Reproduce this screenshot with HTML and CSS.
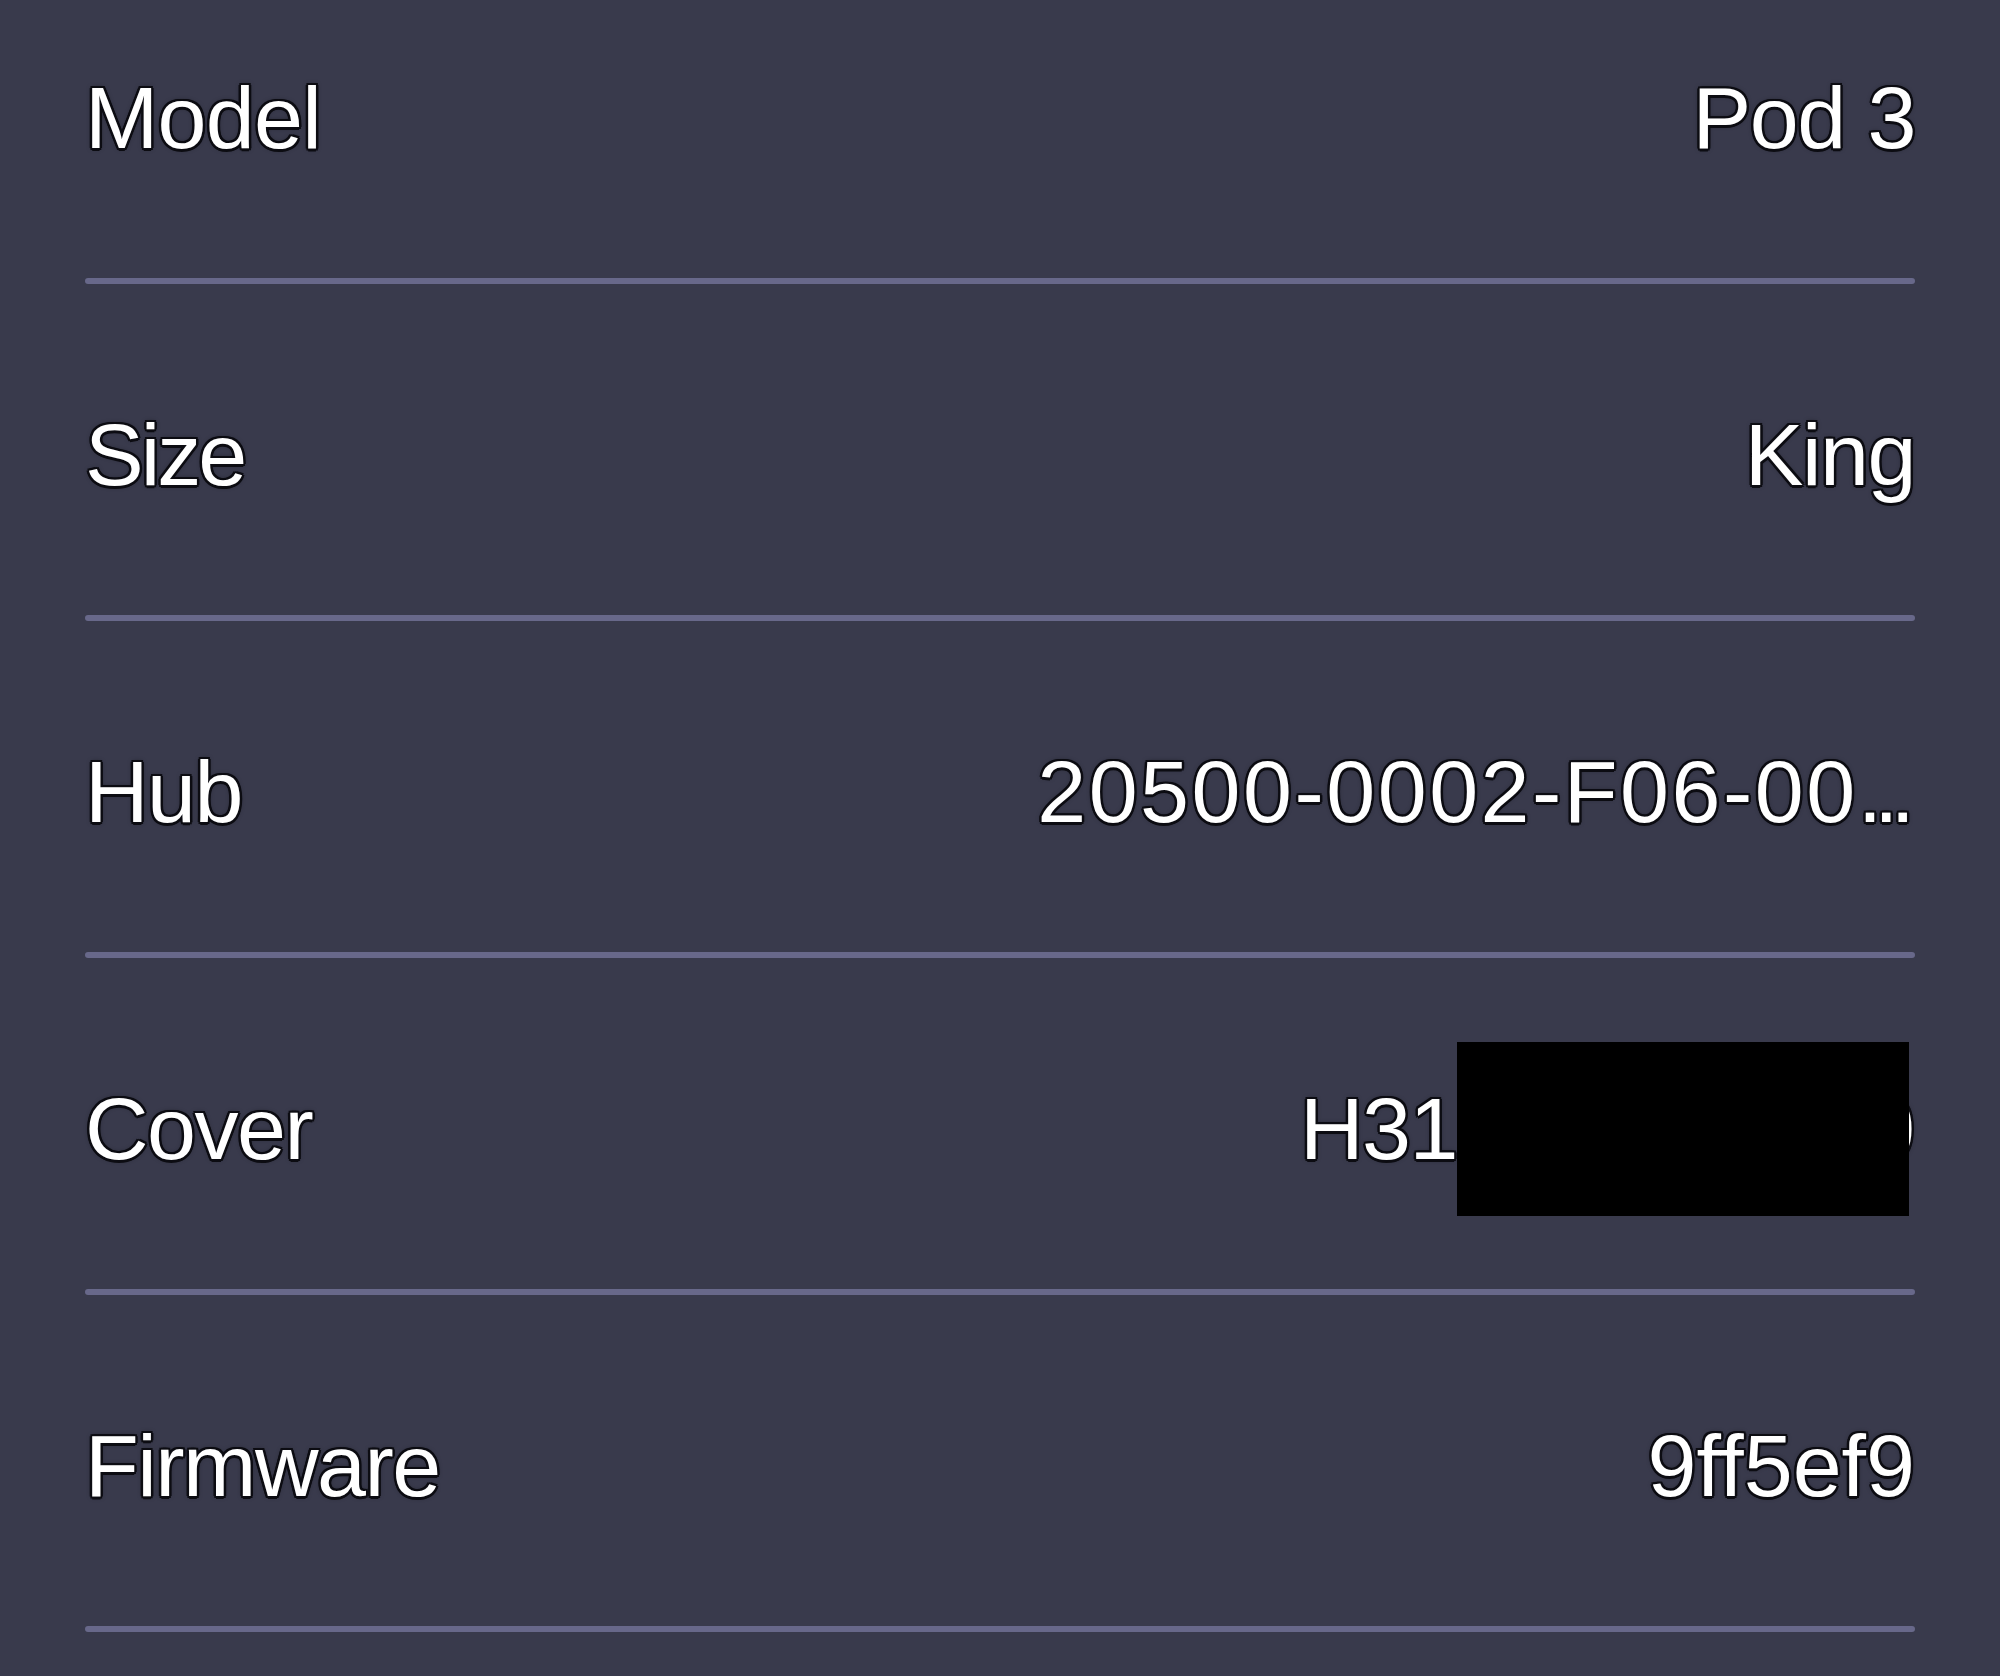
FILE: index.html
```html
<!DOCTYPE html>
<html lang="en">
<head>
<meta charset="utf-8">
<title>Device info</title>
<link rel="stylesheet" href="styles.css">
</head>
<body>
<main class="screen">
  <ul class="info-list">
    <li class="info-row">
      <div class="info-line"><span class="label label-loose">Model</span><span class="value">Pod 3</span></div>
      <div class="divider"></div>
    </li>
    <li class="info-row">
      <div class="info-line"><span class="label label-tight">Size</span><span class="value">King</span></div>
      <div class="divider"></div>
    </li>
    <li class="info-row">
      <div class="info-line"><span class="label">Hub</span><span class="value value-wide">20500-0002-F06-00<span class="dots">...</span></span></div>
      <div class="divider"></div>
    </li>
    <li class="info-row">
      <div class="info-line"><span class="label">Cover</span><span class="value">H31<span class="masked">0</span></span></div>
      <div class="divider"></div>
    </li>
    <li class="info-row">
      <div class="info-line"><span class="label">Firmware</span><span class="value value-normal">9ff5ef9</span></div>
      <div class="divider"></div>
    </li>
  </ul>
</main>
</body>
</html>
```

FILE: styles.css
```css
html, body {
  margin: 0;
  padding: 0;
  background: #393a4c;
}

body {
  width: 2000px;
  height: 1676px;
  overflow: hidden;
  font-family: "Liberation Sans", Arial, sans-serif;
  color: #ffffff;
}

.screen {
  padding: 0 85px;
}

.info-list {
  list-style: none;
  margin: -53px 0 0 0;
  padding: 0;
}

.info-row {
  display: flex;
  flex-direction: column;
  height: 337px;
}

.info-line {
  display: flex;
  justify-content: space-between;
  align-items: center;
  padding-top: 126.5px;
  padding-bottom: 116.5px;
  font-size: 88px;
  line-height: 88px;
  white-space: nowrap;
}

.label,
.value {
  letter-spacing: -1.5px;
  text-shadow:
    2.5px 0 0 #0c0c12, -2.5px 0 0 #0c0c12, 0 2.5px 0 #0c0c12, 0 -2.5px 0 #0c0c12,
    1.8px 1.8px 0 #0c0c12, -1.8px 1.8px 0 #0c0c12, 1.8px -1.8px 0 #0c0c12, -1.8px -1.8px 0 #0c0c12,
    0 0 5px rgba(0, 0, 0, 0.7);
}

.label-loose {
  letter-spacing: -0.7px;
}

.label-tight {
  letter-spacing: -3px;
}

.value-wide {
  letter-spacing: 2.5px;
}

.value-normal {
  letter-spacing: 0;
}

.dots {
  letter-spacing: -8px;
  margin-right: 8px;
}

.masked {
  display: inline-block;
  position: relative;
  width: 458px;
  text-align: right;
  vertical-align: baseline;
  letter-spacing: 0;
}

.masked::after {
  content: "";
  position: absolute;
  left: 0;
  top: -42.5px;
  width: 452px;
  height: 174px;
  background: #000000;
}

.divider {
  height: 6px;
  border-radius: 3px;
  background: #68688a;
}
```
